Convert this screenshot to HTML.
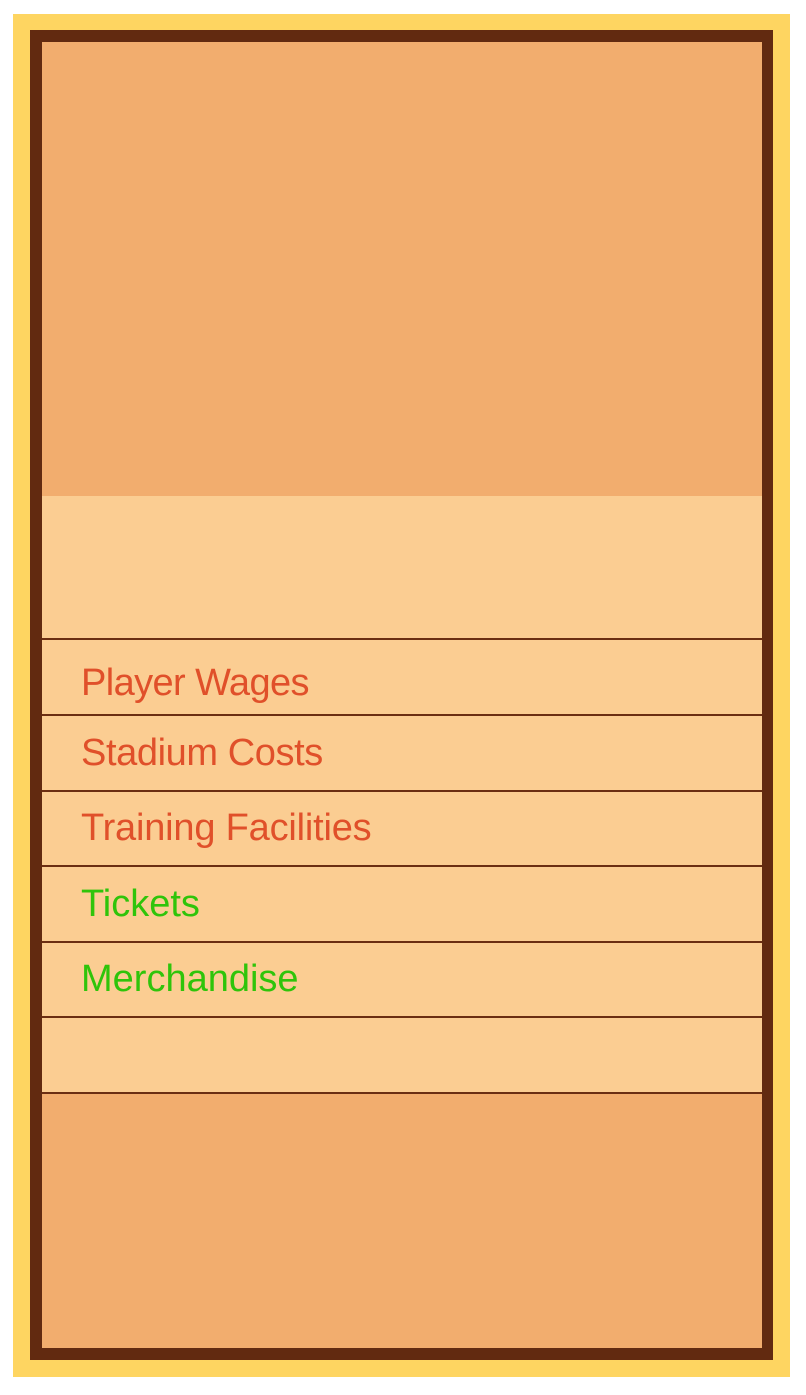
<!DOCTYPE html>
<html><head><style>
html,body{margin:0;padding:0;background:#fff;width:806px;height:1395px;overflow:hidden}
.y{position:absolute;left:13px;top:14px;width:777px;height:1363px;background:#fed561}
.b{position:absolute;left:30px;top:30px;width:743px;height:1330px;background:#622a10}
.o{position:absolute;left:42px;top:42px;width:720px;height:1306px;background:#f2ad6e}
.l{position:absolute;left:42px;top:496px;width:720px;height:597px;background:#fbcd92}
.h{position:absolute;left:42px;width:720px;height:2px;background:#6b2e12}
.t{position:absolute;left:81px;font-family:"Liberation Sans",sans-serif;font-size:38px;line-height:40px}
.r{color:#e0502a}.g{color:#2fc40a}
</style></head><body>
<div class="y"></div><div class="b"></div><div class="o"></div><div class="l"></div>
<div class="h" style="top:638px"></div>
<div class="h" style="top:714px"></div>
<div class="h" style="top:790px"></div>
<div class="h" style="top:865px"></div>
<div class="h" style="top:941px"></div>
<div class="h" style="top:1016px"></div>
<div class="h" style="top:1092px"></div>
<div class="t r" style="top:663px;letter-spacing:-0.6px">Player Wages</div>
<div class="t r" style="top:733px;letter-spacing:-0.4px">Stadium Costs</div>
<div class="t r" style="top:808px;letter-spacing:-0.2px">Training Facilities</div>
<div class="t g" style="top:884px">Tickets</div>
<div class="t g" style="top:959px">Merchandise</div>
</body></html>
